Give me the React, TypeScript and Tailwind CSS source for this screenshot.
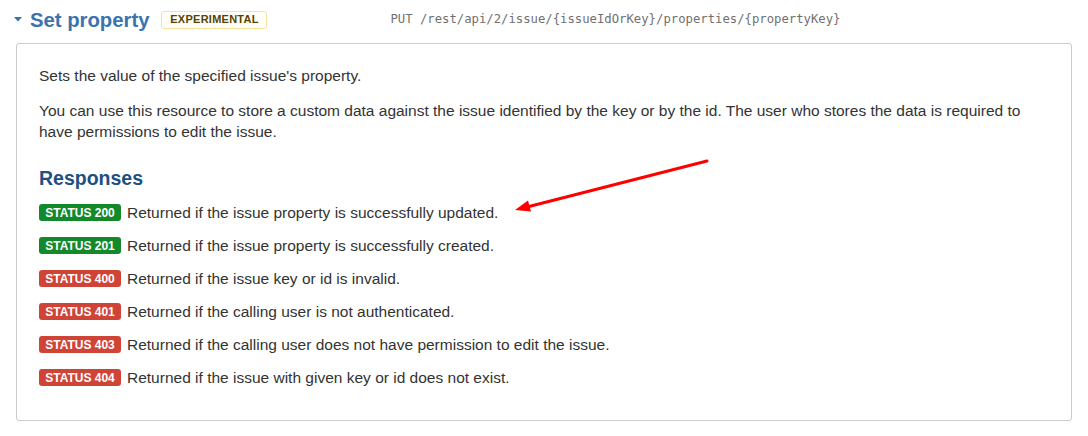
type Status = { code: number; text: string }

const statuses: Status[] = [
  { code: 200, text: 'Returned if the issue property is successfully updated.' },
  { code: 201, text: 'Returned if the issue property is successfully created.' },
  { code: 400, text: 'Returned if the issue key or id is invalid.' },
  { code: 401, text: 'Returned if the calling user is not authenticated.' },
  { code: 403, text: 'Returned if the calling user does not have permission to edit the issue.' },
  { code: 404, text: 'Returned if the issue with given key or id does not exist.' },
]

function StatusBadge({ code }: { code: number }) {
  const ok = code < 300
  return (
    <span
      className={
        ok
          ? 'inline-flex h-[17px] w-[82px] items-center justify-center rounded-[3px] bg-[#14892c] text-[12px] font-bold leading-none text-white'
          : 'inline-flex h-[17px] w-[82px] items-center justify-center rounded-[3px] bg-[#d04437] text-[12px] font-bold leading-none text-white'
      }
    >
      STATUS {code}
    </span>
  )
}

export default function App() {
  return (
    <div className="h-[436px] w-[1088px] bg-white font-['Liberation_Sans',Arial,sans-serif] text-[#333]">
      {/* header */}
      <div className="flex h-[39px] items-center pl-[14px]">
        <svg width="8" height="5" viewBox="0 0 8 5" className="mt-[-1px]">
          <polygon points="0,0 8,0 4,4.5" fill="#3572b0" />
        </svg>
        <h2 className="ml-[8px] text-[20.3px] font-bold leading-6 text-[#3b73af]">Set property</h2>
        <span className="ml-[12px] inline-flex h-[18px] w-[106px] items-center justify-center rounded-[3px] border border-[#fbe29a] bg-[#fffef8] text-[11px] font-bold tracking-[0.25px] text-[#594300]">
          EXPERIMENTAL
        </span>
        <span className="ml-[123px] font-['DejaVu_Sans_Mono',monospace] text-[12.25px] text-[#707070]">
          PUT /rest/api/2/issue/{'{issueIdOrKey}'}/properties/{'{propertyKey}'}
        </span>
      </div>

      {/* panel */}
      <div className="relative mx-4 mt-[4px] h-[378px] rounded-[3px] border border-[#cccccc] px-[22px] pt-[22px]">
        <p className="text-[15.5px] leading-5">Sets the value of the specified issue's property.</p>
        <p className="mt-[14px] text-[15.5px] leading-[21px]">
          You can use this resource to store a custom data against the issue identified by the key or by the id. The user who stores the
          data is required to have permissions to edit the issue.
        </p>

        <h3 className="mt-[24px] text-[19.5px] font-bold leading-6 text-[#205081]">Responses</h3>

        <div className="mt-[6px] flex flex-col">
          {statuses.map((s) => (
            <div key={s.code} className="flex h-[33px] items-center gap-[6px] text-[15.5px]">
              <StatusBadge code={s.code} />
              <span>{s.text}</span>
            </div>
          ))}
        </div>

        {/* annotation arrow */}
        <svg className="pointer-events-none absolute left-[-1px] top-[-1px]" width="1056" height="378">
          <line x1="691" y1="118" x2="511" y2="164" stroke="#ff0000" strokeWidth="3" strokeLinecap="round" />
          <polygon points="499,167 515,168.5 512,157.5" fill="#ff0000" />
        </svg>
      </div>
    </div>
  )
}
